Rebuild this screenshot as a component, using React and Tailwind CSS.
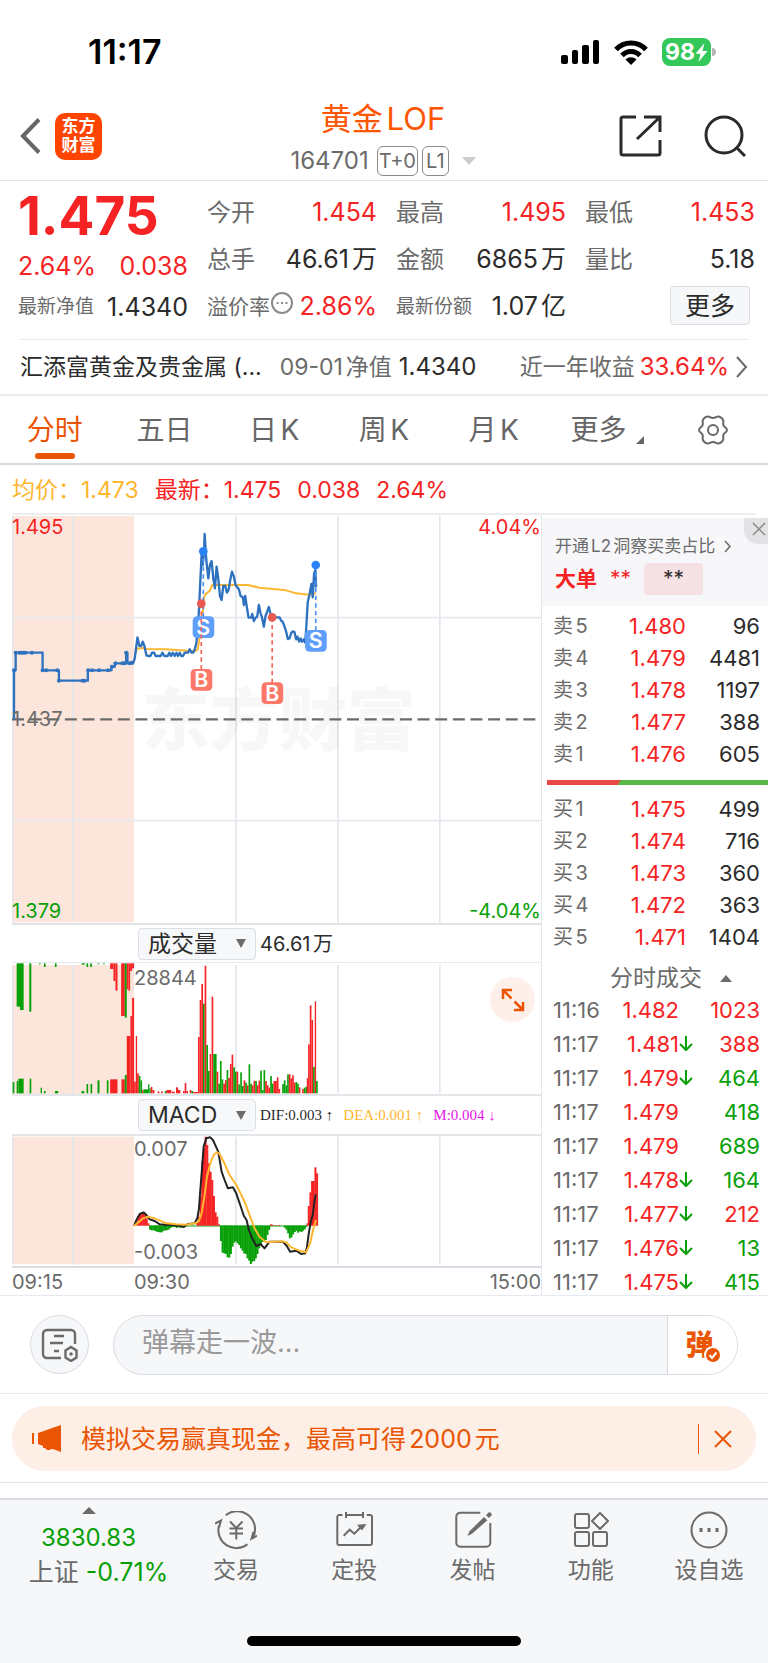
const quotes = [
  { label: '今开', value: '1.454', tone: 'text-[#f52323]' },
  { label: '最高', value: '1.495', tone: 'text-[#f52323]' },
  { label: '最低', value: '1.453', tone: 'text-[#f52323]' },
  { label: '总手', value: '46.61万', tone: 'text-[#2b2b2b]' },
  { label: '金额', value: '6865万', tone: 'text-[#2b2b2b]' },
  { label: '量比', value: '5.18', tone: 'text-[#2b2b2b]' },
];

const sells = [
  ['卖5', '1.480', '96'],
  ['卖4', '1.479', '4481'],
  ['卖3', '1.478', '1197'],
  ['卖2', '1.477', '388'],
  ['卖1', '1.476', '605'],
];

const buys = [
  ['买1', '1.475', '499'],
  ['买2', '1.474', '716'],
  ['买3', '1.473', '360'],
  ['买4', '1.472', '363'],
  ['买5', '1.471', '1404'],
];

const ticks = [
  { time: '11:16', price: '1.482', down: false, volume: '1023', buy: true },
  { time: '11:17', price: '1.481', down: true, volume: '388', buy: true },
  { time: '11:17', price: '1.479', down: true, volume: '464', buy: false },
  { time: '11:17', price: '1.479', down: false, volume: '418', buy: false },
  { time: '11:17', price: '1.479', down: false, volume: '689', buy: false },
  { time: '11:17', price: '1.478', down: true, volume: '164', buy: false },
  { time: '11:17', price: '1.477', down: true, volume: '212', buy: true },
  { time: '11:17', price: '1.476', down: true, volume: '13', buy: false },
  { time: '11:17', price: '1.475', down: true, volume: '415', buy: false },
];

const RED = '#f52323';
const GREEN = '#08a008';

const gridX = [219, 709, 1016, 1322];

const pricePoints =
  '42,628 42,481 47,481 47,428 128,428 128,481 177,481 177,512 264,512 264,481 335,481 335,470 345,470 345,460 379,460 379,428 383,428 383,460 400,460 405,445 413,382 419,408 424,408 429,395 434,408 440,436 445,438 452,438 457,428 463,428 468,438 483,438 488,428 494,438 504,438 509,428 514,438 519,428 525,438 530,428 535,438 540,428 545,438 550,438 555,428 565,428 570,418 576,428 581,428 586,415 590,400 594,360 598,300 602,215 606,130 609,165 613,130 615,72 620,150 626,205 631,165 636,153 641,205 646,235 651,170 656,205 661,258 666,270 671,228 677,228 682,248 687,240 692,210 697,185 703,200 708,225 713,232 718,238 723,258 730,262 733,285 737,258 742,292 747,323 755,323 758,312 763,333 768,323 773,320 778,285 783,310 787,320 793,350 798,318 803,305 808,291 813,312 818,322 840,322 845,332 850,336 855,350 860,365 865,387 870,385 875,370 880,364 885,366 890,388 894,380 899,395 903,385 908,395 913,388 917,398 920,360 925,275 930,255 936,222 940,262 944,190 948,180 950,232';

const avgPoints =
  '406,432 412,416 430,414 440,417 500,418 585,424 594,418 598,395 602,360 610,300 613,262 620,250 630,243 638,225 700,225 745,225 780,233 860,241 890,250 930,254 950,250';

const auctionDots = [
  [42, 481], [47, 428], [58, 428], [64, 428], [70, 428], [76, 428], [96, 428], [128, 481], [139, 481], [172, 481],
  [177, 512], [248, 512], [254, 512], [265, 481], [277, 481], [298, 481], [325, 481], [336, 470], [347, 460],
  [368, 460], [374, 460], [379, 428], [390, 460], [396, 458],
];

// [x, width, top, isUp]
const volumeBars = [
  [38, 5, 546, 0], [50, 5, 543, 0], [55, 16, 536, 0], [89, 5, 536, 0], [122, 4, 563, 0], [132, 5, 573, 0],
  [165, 10, 573, 0], [245, 8, 573, 0], [260, 5, 552, 0], [272, 5, 552, 0], [293, 6, 541, 0], [321, 5, 541, 0],
  [331, 22, 538, 1], [365, 10, 538, 1], [375, 6, 525, 0], [381, 11, 408, 1], [392, 5, 348, 1], [397, 6, 294, 1],
  [403, 5, 545, 1], [408, 4, 408, 1], [412, 5, 520, 1], [417, 5, 528, 0], [422, 5, 541, 0], [427, 4, 570, 1],
  [431, 14, 568, 0], [445, 4, 553, 0], [449, 4, 565, 0], [453, 5, 561, 1], [458, 6, 570, 1], [474, 5, 574, 1],
  [484, 5, 574, 1], [495, 5, 573, 0], [500, 15, 570, 1], [517, 8, 575, 1], [529, 6, 562, 1], [535, 7, 570, 1],
  [550, 5, 573, 1], [555, 5, 549, 1], [560, 5, 573, 1], [570, 5, 570, 1], [575, 5, 573, 0], [580, 15, 576, 1],
  [595, 5, 411, 1], [600, 5, 300, 1], [605, 5, 252, 1], [610, 5, 311, 0], [615, 5, 197, 1], [620, 5, 435, 0],
  [625, 5, 513, 0], [630, 5, 462, 1], [636, 5, 290, 1], [641, 10, 462, 0], [651, 5, 515, 1], [656, 5, 551, 0],
  [661, 5, 483, 0], [666, 5, 538, 0], [671, 5, 551, 1], [676, 5, 540, 1], [681, 5, 510, 0], [686, 5, 534, 1],
  [691, 5, 492, 1], [696, 5, 464, 1], [701, 5, 502, 0], [706, 5, 515, 0], [711, 5, 515, 1], [716, 5, 553, 0],
  [722, 5, 517, 0], [727, 5, 558, 0], [732, 5, 541, 1], [737, 5, 548, 0], [742, 5, 556, 1], [747, 5, 493, 0],
  [752, 5, 551, 0], [757, 5, 556, 1], [762, 5, 542, 1], [767, 5, 543, 0], [772, 5, 556, 1], [777, 5, 542, 1],
  [782, 5, 512, 0], [787, 5, 570, 0], [792, 5, 510, 0], [797, 5, 543, 1], [802, 5, 556, 1], [807, 5, 563, 1],
  [812, 5, 528, 0], [817, 5, 551, 0], [822, 10, 543, 1], [832, 5, 532, 1], [837, 5, 567, 1], [848, 5, 552, 0],
  [853, 5, 541, 0], [858, 5, 556, 0], [863, 5, 523, 0], [868, 5, 523, 1], [873, 5, 535, 1], [878, 5, 526, 1],
  [883, 5, 548, 1], [888, 5, 546, 0], [893, 5, 551, 0], [898, 5, 562, 1], [908, 5, 567, 1], [913, 5, 563, 0],
  [918, 5, 560, 0], [922, 4, 535, 1], [926, 5, 433, 1], [931, 5, 316, 1], [936, 5, 360, 1], [941, 5, 501, 0],
  [946, 4, 304, 1], [950, 5, 543, 0],
];

// unmatched auction orders, drawn from the top: [x, width, bottom, isUp]
const auctionBars = [
  [50, 10, 320, 0], [60, 11, 330, 0], [88, 6, 335, 0], [117, 5, 193, 0], [132, 5, 201, 0], [165, 5, 201, 0],
  [245, 10, 194, 0], [260, 5, 201, 0], [271, 5, 201, 0], [293, 5, 193, 0], [310, 5, 193, 0], [331, 10, 207, 1],
  [341, 6, 243, 1], [347, 6, 272, 1], [364, 11, 348, 1], [375, 6, 353, 0], [381, 5, 268, 1], [386, 5, 272, 1],
  [391, 6, 213, 1], [397, 6, 205, 1],
];

// [x, y] with the zero line at 977
const macdBars = [
  [408, 966], [413, 948], [418, 942], [423, 938], [428, 936], [433, 942], [438, 955], [443, 970], [448, 989],
  [453, 991], [458, 991], [463, 992], [468, 995], [473, 996], [478, 997], [483, 997], [488, 993], [493, 991],
  [498, 991], [503, 989], [508, 985], [513, 982], [518, 981], [523, 981], [528, 984], [533, 981], [538, 983],
  [543, 983], [548, 984], [553, 981], [590, 968], [595, 950], [600, 890], [605, 785], [610, 745], [615, 710],
  [620, 735], [625, 790], [630, 815], [635, 840], [640, 888], [645, 937], [650, 950], [655, 973], [661, 1023],
  [666, 1058], [671, 1060], [676, 1062], [681, 1072], [686, 1073], [691, 1062], [696, 1040], [701, 1028],
  [706, 1024], [711, 1030], [716, 1035], [721, 1045], [726, 1052], [731, 1060], [736, 1062], [741, 1075],
  [746, 1082], [751, 1092], [756, 1085], [761, 1083], [766, 1075], [771, 1062], [776, 1045], [781, 1035],
  [786, 1026], [791, 1022], [796, 1020], [801, 1005], [806, 990], [811, 973], [816, 974], [826, 975], [836, 975],
  [853, 983], [858, 989], [863, 1000], [868, 1015], [873, 1012], [878, 1003], [883, 996], [888, 992], [893, 998],
  [898, 994], [903, 996], [908, 992], [913, 988], [918, 981], [921, 970], [925, 918], [930, 877], [935, 843],
  [940, 843], [945, 802], [950, 820],
];

const difPoints =
  '403,977 410,960 420,942 432,937 440,945 450,958 465,963 480,973 500,975 520,975 553,980 565,972 585,970 593,955 598,925 602,870 606,820 612,740 620,715 632,712 640,720 650,742 656,755 666,815 675,840 685,865 700,862 710,880 722,915 733,948 741,960 748,990 758,1015 770,1038 783,1032 795,1045 810,1025 850,1025 862,1038 872,1055 890,1052 905,1062 917,1060 922,1045 928,1000 934,965 940,945 945,905 949,883';

const deaPoints =
  '403,977 415,968 430,955 445,950 465,955 500,970 530,973 560,974 585,970 597,965 606,940 615,885 622,830 632,790 642,765 652,757 660,762 672,785 690,825 712,858 735,905 750,945 765,985 780,1010 800,1027 850,1024 862,1028 875,1042 900,1052 920,1057 932,1030 942,985 950,960';

const StatusBar = () => (
  <div className="flex h-24 items-center justify-between pt-2 pl-[88px] pr-[52px] text-black">
    <span className="text-[34px] font-semibold leading-10">11:17</span>
    <div className="flex items-center gap-[14px]">
      <svg width="39" height="25" viewBox="0 0 39 25">
        <rect x="0" y="15" width="7" height="9" rx="2" />
        <rect x="11" y="10" width="6" height="14" rx="2" />
        <rect x="21" y="5" width="7" height="19" rx="2" />
        <rect x="32" y="0" width="6" height="24" rx="2" />
      </svg>
      <svg width="34" height="25" viewBox="0 0 34 25" fill="none" stroke="#000" strokeWidth="5">
        <path d="M2 9.5C10 .7 24 .7 32 9.5" />
        <path d="M8 15.5c5-5.400 13-5.400 18 0" />
        <path d="M17 25l-5.500-5.500c3-3 8-3 11 0z" fill="#000" stroke="none" />
      </svg>
      <div className="flex items-center gap-px">
        <div className="flex h-7 w-[49px] items-center justify-center rounded-lg bg-[#34c759] text-white">
          <span className="text-[23px] font-bold leading-7">98</span>
          <svg width="13" height="19" viewBox="0 0 13 19" fill="currentColor">
            <path d="M9.500 0L.5 10.800h5L3.500 19l9-11h-5z" />
          </svg>
        </div>
        <span className="h-2 w-1 rounded-r-full bg-[#b5b5b8]" />
      </div>
    </div>
  </div>
);

const Header = () => (
  <header className="grid h-[85px] grid-cols-[1fr_auto_1fr] items-center border-b border-[#e4e4e6] pl-[14px] pr-[22px]">
    <div className="flex items-center gap-2 pb-1">
      <button aria-label="返回" className="text-[#666]">
        <svg width="33" height="38" viewBox="0 0 33 38" fill="none" stroke="currentColor" strokeWidth="4">
          <path d="M25 2.500L9 19l16 16.500" />
        </svg>
      </button>
      <div className="flex h-[47px] w-[47px] flex-col items-center justify-center rounded-[10px] bg-[#ff4400] text-[17px] font-bold leading-[19px] text-white">
        <span>东方</span>
        <span>财富</span>
      </div>
    </div>
    <div className="flex flex-col items-center pl-[6px]">
      <h1 className="text-[31px] leading-10 text-[#ff5500]">黄金LOF</h1>
      <div className="mt-[6px] flex h-8 items-center gap-1 text-[#6b6b6b]">
        <span className="mr-1 text-[24px] leading-8">164701</span>
        <span className="flex h-[30px] items-center rounded-md border border-[#8a8a8a] px-px text-[20px] leading-7">T+0</span>
        <span className="flex h-[30px] items-center rounded-md border border-[#8a8a8a] px-[3px] text-[20px] leading-7">L1</span>
        <svg className="ml-[9px]" width="14" height="8" viewBox="0 0 14 8" fill="#ccc">
          <path d="M0 0h14L7 8z" />
        </svg>
      </div>
    </div>
    <div className="flex items-center justify-end gap-[42px] pb-1 text-[#2b2b2b]">
      <button aria-label="分享">
        <svg width="43" height="42" viewBox="0 0 43 42" fill="none" stroke="currentColor" strokeWidth="3">
          <path d="M17 2H4a2 2 0 00-2 2v34a2 2 0 002 2h35a2 2 0 002-2V25" />
          <path d="M25 2h16v15M41 2L18 24" />
        </svg>
      </button>
      <button aria-label="搜索">
        <svg width="42" height="42" viewBox="0 0 42 42" fill="none" stroke="currentColor" strokeWidth="3">
          <circle cx="20" cy="20" r="18" />
          <path d="M32 32l9 9" />
        </svg>
      </button>
    </div>
  </header>
);

const QuotePanel = () => (
  <section className="grid grid-cols-[170px_1fr] gap-x-[19px] pt-2 pb-[9px] pl-[18px] pr-[13px]">
    <div>
      <div className="text-[53px] font-bold leading-[54px] text-[#f52323]">1.475</div>
      <div className="flex justify-between text-[25px] leading-[46px] text-[#f52323]">
        <span>2.64%</span>
        <span>0.038</span>
      </div>
      <div className="flex items-center justify-between leading-[36px]">
        <span className="text-[19px] text-[#6b6b6b]">最新净值</span>
        <span className="text-[25px] text-[#2b2b2b]">1.4340</span>
      </div>
    </div>
    <div className="grid grid-cols-3 gap-x-[19px] text-[25px] leading-[47px]">
      {quotes.map((q) => (
        <div key={q.label} className="flex items-center justify-between">
          <span className="text-[24px] text-[#6b6b6b]">{q.label}</span>
          <span className={q.tone}>{q.value}</span>
        </div>
      ))}
      <div className="flex items-center justify-between">
        <span className="flex items-center text-[21px] text-[#6b6b6b]">
          溢价率
          <svg className="mb-2" width="24" height="24" viewBox="0 0 24 24" fill="none" stroke="#8a8a8a" strokeWidth="2">
            <circle cx="12" cy="12" r="10" />
            <path d="M6.500 12h2M11 12h2M15.500 12h2" />
          </svg>
        </span>
        <span className="text-[#f52323]">2.86%</span>
      </div>
      <div className="flex items-center justify-between">
        <span className="text-[19px] text-[#6b6b6b]">最新份额</span>
        <span className="text-[#2b2b2b]">1.07亿</span>
      </div>
      <div className="flex items-center justify-end pb-[2px] pr-[5px]">
        <button className="h-[39px] w-20 rounded border border-[#d9dce2] bg-[#f6f7f9] text-[25px] leading-9 text-[#2b2b2b]">更多</button>
      </div>
    </div>
  </section>
);

const FundRow = () => (
  <a href="#fund" className="flex h-[57px] items-center border-b-2 border-[#ededef] px-5">
    <div className="-mt-px flex h-full w-full items-center border-t border-[#e8e8ea] text-[23px] leading-8">
      <span className="text-[#2b2b2b]">汇添富黄金及贵金属 (...</span>
      <span className="ml-[18px] text-[#6b6b6b]">09-01净值</span>
      <span className="ml-[7px] text-[24px] text-[#2b2b2b]">1.4340</span>
      <span className="ml-auto text-[#6b6b6b]">近一年收益</span>
      <span className="ml-[5px] text-[24px] text-[#f52323]">33.64%</span>
      <svg className="ml-[6px]" width="13" height="22" viewBox="0 0 13 22" fill="none" stroke="#6b6b6b" strokeWidth="2">
        <path d="M2 1l9 10-9 10" />
      </svg>
    </div>
  </a>
);

const PeriodTabs = () => (
  <nav className="grid h-[69px] grid-cols-7 place-items-center border-b-2 border-[#d8dce2] text-[28px] leading-10 text-[#666]">
    <button className="relative text-[#ea5504]">
      分时
      <span className="absolute inset-x-2 -bottom-[9px] h-[6px] rounded-full bg-[#ea5504]" />
    </button>
    <button>五日</button>
    <button>日K</button>
    <button>周K</button>
    <button>月K</button>
    <button className="flex items-end gap-[10px] pl-2">
      更多
      <svg className="mb-[6px]" width="8" height="8" viewBox="0 0 8 8" fill="currentColor">
        <path d="M8 0v8H0z" />
      </svg>
    </button>
    <button aria-label="设置">
      <svg width="32" height="32" viewBox="0 0 32 32" fill="none" stroke="currentColor" strokeWidth="2">
        <path d="M11 2.500c1.500 0 2.500 1.500 5 1.500s3.500-1.500 5-1.500c2 0 4.600 1.800 5.200 3.800.5 1.700-.4 2.700.2 4.900.6 2.100 3.600 2.300 3.600 4.800s-3 2.700-3.600 4.800c-.6 2.200.3 3.200-.2 4.900-.6 2-3.200 3.800-5.200 3.800-1.500 0-2.500-1.500-5-1.500s-3.500 1.500-5 1.500c-2 0-4.600-1.800-5.200-3.800-.5-1.700.4-2.700-.2-4.900C5 18.700 2 18.500 2 16s3-2.700 3.600-4.800c.6-2.200-.3-3.200.2-4.900.6-2 3.200-3.800 5.200-3.800z" />
        <circle cx="16" cy="16" r="5" />
      </svg>
    </button>
  </nav>
);

const GridLines = ({ top, bottom }) => (
  <g stroke="#e3e6eb" strokeWidth="5">
    {gridX.map((x) => (
      <path key={x} d={`M${x} ${top}V${bottom}`} />
    ))}
    <path d={`M38 ${top}V${bottom}`} />
  </g>
);

const Marker = ({ x, dotY, boxY, type }) => {
  const sell = type === 'S';
  return (
    <g>
      <path d={`M${x} ${dotY}V${boxY}`} stroke={sell ? '#4a92f8' : '#fa6456'} strokeWidth="5" strokeDasharray="13 10" />
      <circle cx={x} cy={dotY} r="13" fill={sell ? '#2b82f6' : '#ea5a50'} />
      <rect x={x - 32} y={boxY - 32} width="65" height="65" rx="13" fill={sell ? '#5f9ffc' : '#fd7868'} />
      <text x={x} y={boxY + 23} textAnchor="middle" fontSize="64" fontWeight="600" fill="#fff">{type}</text>
    </g>
  );
};

const PriceChart = () => (
  <div className="relative text-[20px] leading-6">
    <svg className="block h-[410px] w-full" viewBox="36 15 1590 1230" preserveAspectRatio="none" fill="none">
      <rect x="36" y="18" width="367" height="1219" fill="#fce6db" />
      <GridLines top={18} bottom={1237} />
      <path d="M36 323H1626M36 932H1626" stroke="#e6e9ef" strokeWidth="5" />
      <path d="M36 1242H1626" stroke="#dfe2e7" strokeWidth="6" />
      <text x="425" y="706" fontSize="206" fontWeight="900" fill="#000" fillOpacity="0.03">东方财富</text>
      <path d="M36 628H1620" stroke="#6b6b6b" strokeWidth="7" strokeDasharray="36 17" />
      <polyline points={avgPoints} stroke="#fdb62f" strokeWidth="6" strokeLinejoin="round" />
      <polyline points={pricePoints} stroke="#2e72bf" strokeWidth="7" strokeLinejoin="round" />
      {auctionDots.map(([x, y]) => (
        <circle key={`${x}-${y}`} cx={x} cy={y} r="6" fill="#2e72bf" />
      ))}
      <Marker x={611} dotY={124} boxY={351} type="S" />
      <Marker x={605} dotY={281} boxY={509} type="B" />
      <Marker x={818} dotY={322} boxY={549} type="B" />
      <Marker x={949} dotY={165} boxY={392} type="S" />
    </svg>
    <span className="absolute left-0 top-0 text-[#f52323]">1.495</span>
    <span className="absolute right-0 top-0 text-[#f52323]">4.04%</span>
    <span className="absolute left-0 top-48 text-[#6b6b6b]">1.437</span>
    <span className="absolute bottom-[2px] left-0 text-[#08a008]">1.379</span>
    <span className="absolute bottom-[2px] right-0 text-[#08a008]">-4.04%</span>
  </div>
);

const IndicatorButton = ({ children }) => (
  <button className="flex h-8 w-[118px] items-center justify-between rounded border border-[#dcdfe5] bg-[#f7f8fa] px-[9px] text-[23px] leading-7 text-[#2b2b2b]">
    {children}
    <svg width="10" height="9" viewBox="0 0 10 9" fill="#6b6b6b">
      <path d="M0 0h10L5 9z" />
    </svg>
  </button>
);

const VolumeChart = () => (
  <div className="relative">
    <svg className="block h-[131px] w-full" viewBox="36 189 1590 393" preserveAspectRatio="none">
      <rect x="36" y="195" width="367" height="387" fill="#fce6db" />
      <GridLines top={195} bottom={580} />
      {auctionBars.map(([x, w, y, up]) => (
        <rect key={x} x={x} y="190" width={w} height={y - 190} fill={up ? RED : GREEN} />
      ))}
      {volumeBars.map(([x, w, y, up]) => (
        <rect key={x} x={x} y={y} width={w} height={580 - y} fill={up ? RED : GREEN} />
      ))}
    </svg>
    <span className="absolute left-[122px] top-[3px] text-[20px] leading-6 text-[#6b6b6b]">28844</span>
    <button aria-label="全屏" className="absolute right-[6px] top-[14px] flex h-[45px] w-[45px] items-center justify-center rounded-full bg-[#fef0e8]">
      <svg width="24" height="24" viewBox="0 0 24 24" fill="none" stroke="#ea5504" strokeWidth="2.500">
        <path d="M2 11V2h9M2 2l8.500 8.500M22 14v8h-9M22 22l-8.500-8.500" />
      </svg>
    </button>
  </div>
);

const MacdChart = () => (
  <div className="relative text-[20px] leading-6 text-[#6b6b6b]">
    <svg className="block h-[130px] w-full" viewBox="36 708 1590 390" preserveAspectRatio="none" fill="none">
      <rect x="36" y="710" width="367" height="383" fill="#fce6db" />
      <GridLines top={710} bottom={1093} />
      <path d="M448 978H922" stroke={GREEN} strokeWidth="3" />
      {macdBars.map(([x, y]) => (
        <rect key={x} x={x} y={Math.min(y, 977)} width="6" height={Math.abs(977 - y)} fill={y < 977 ? RED : GREEN} />
      ))}
      <polyline points={difPoints} stroke="#222" strokeWidth="6" strokeLinejoin="round" />
      <polyline points={deaPoints} stroke="#fdb62f" strokeWidth="6" strokeLinejoin="round" />
    </svg>
    <span className="absolute left-[122px] top-px">0.007</span>
    <span className="absolute bottom-[2px] left-[122px]">-0.003</span>
  </div>
);

const Charts = () => (
  <div className="min-w-0 flex-1">
    <PriceChart />
    <div className="flex h-[38px] items-center gap-1 border-b border-[#e6e9ef] pl-[126px]">
      <IndicatorButton>成交量</IndicatorButton>
      <span className="text-[20px] leading-6 text-[#2b2b2b]">46.61万</span>
    </div>
    <VolumeChart />
    <div className="flex h-[42px] items-center gap-1 border-y-2 border-[#e3e6eb] pl-[126px]">
      <IndicatorButton>MACD</IndicatorButton>
      <div className="flex gap-[10px] font-['Liberation_Serif','DejaVu_Sans',serif] text-[15px] leading-6">
        <span className="text-[#2b2b2b]">DIF:0.003 ↑</span>
        <span className="text-[#fdb62f]">DEA:0.001 ↑</span>
        <span className="text-[#e815e8]">M:0.004 ↓</span>
      </div>
    </div>
    <MacdChart />
    <div className="relative flex h-[29px] items-center justify-between border-t-2 border-[#d8dce2] pt-px text-[20px] leading-6 text-[#6b6b6b]">
      <span>09:15</span>
      <span className="absolute left-[122px]">09:30</span>
      <span>15:00</span>
    </div>
  </div>
);

const DepthTable = ({ rows }) => (
  <table className="w-full text-[22px] leading-8">
    <tbody>
      {rows.map(([label, price, volume]) => (
        <tr key={label} className="h-8">
          <td className="p-0 pl-[11px] text-[20px] text-[#6b6b6b]">{label}</td>
          <td className="w-20 p-0 text-right text-[#f52323]">{price}</td>
          <td className="w-[82px] p-0 pr-2 text-right text-[#2b2b2b]">{volume}</td>
        </tr>
      ))}
    </tbody>
  </table>
);

const OrderBook = () => (
  <aside className="w-[227px] shrink-0 border-l border-[#e3e6eb] pt-[3px]">
    <div className="relative h-[88px] bg-[#f7f7fa] pl-[13px] pt-4">
      <button aria-label="关闭" className="absolute right-0 top-0 flex h-[26px] w-6 items-center justify-end rounded-bl-[14px] bg-[#e3e3e6] pb-1 pr-[2px] text-[#8a8a8a]">
        <svg width="14" height="14" viewBox="0 0 14 14" fill="none" stroke="currentColor" strokeWidth="1.500">
          <path d="M1 1l12 12M13 1L1 13" />
        </svg>
      </button>
      <a href="#l2" className="flex items-center gap-[9px] text-[17px] leading-6 text-[#6b6b6b]">
        开通L2洞察买卖占比
        <svg width="8" height="13" viewBox="0 0 8 13" fill="none" stroke="currentColor" strokeWidth="1.500">
          <path d="M1 1l5 5.500L1 12" />
        </svg>
      </a>
      <div className="mt-[5px] flex h-8 items-center text-[21px] font-bold leading-8 text-[#f52323]">
        大单
        <span className="ml-[13px] font-normal">**</span>
        <span className="ml-[13px] w-[59px] rounded-sm bg-[#f6e1e4] text-center font-normal text-[#2b2b2b]">**</span>
      </div>
    </div>
    <div className="pt-1">
      <DepthTable rows={sells} />
    </div>
    <svg className="mb-2 mt-[10px] block h-[5px] w-full pl-[5px]" viewBox="0 0 220 5" preserveAspectRatio="none">
      <rect width="220" height="5" fill="#5ab946" />
      <path d="M0 0h74l-4 5H0z" fill="#ea4848" />
    </svg>
    <DepthTable rows={buys} />
    <button className="flex h-10 w-full items-center justify-center gap-[18px] pl-[42px] pr-[10px] pt-[10px] text-[23px] leading-[30px] text-[#6b6b6b]">
      分时成交
      <svg width="12" height="7" viewBox="0 0 12 7" fill="currentColor">
        <path d="M0 7h12L6 0z" />
      </svg>
    </button>
    <table className="-mb-1 w-full text-[22px] leading-[34px]">
      <tbody>
        {ticks.map((t, i) => (
          <tr key={i} className="h-[34px]">
            <td className="p-0 pl-[11px] text-[#6b6b6b]">{t.time}</td>
            <td className="w-[68px] p-0 text-right text-[#f52323]">{t.price}</td>
            <td className="w-[14px] p-0">
              {t.down && (
                <svg className="block" width="14" height="16" viewBox="0 0 14 16" fill="none" stroke={GREEN} strokeWidth="2">
                  <path d="M7 0v14M1 8l6 6 6-6" />
                </svg>
              )}
            </td>
            <td className={`w-[75px] p-0 pr-2 text-right ${t.buy ? 'text-[#f52323]' : 'text-[#08a008]'}`}>{t.volume}</td>
          </tr>
        ))}
      </tbody>
    </table>
  </aside>
);

const CommentBar = () => (
  <div className="flex h-[99px] items-center gap-6 border-y border-[#e6e9ef] px-[30px]">
    <button aria-label="弹幕设置" className="flex h-[59px] w-[59px] shrink-0 items-center justify-center rounded-full border border-[#d9dce2] bg-[#f6f7f9]">
      <svg width="37" height="34" viewBox="0 0 37 34" fill="none" stroke="#6b6b6b" strokeWidth="2.400">
        <path d="M34 16V6a4 4 0 00-4-4H6a4 4 0 00-4 4v20a4 4 0 004 4h14" />
        <path d="M13 8h10M9 15h13M13 23h5" />
        <path d="M30 19l5.500 3.500v7L30 33l-5.500-3.500v-7z" />
        <circle cx="30" cy="26" r="1.800" fill="#6b6b6b" stroke="none" />
      </svg>
    </button>
    <div className="flex h-[60px] flex-1 overflow-hidden rounded-full border border-[#d9dce2] bg-[#f6f7f9]">
      <input
        aria-label="弹幕"
        placeholder="弹幕走一波..."
        className="min-w-0 flex-1 bg-transparent pb-[2px] pl-7 text-[27px] text-[#2b2b2b] outline-none placeholder:text-[#999]"
      />
      <button className="relative w-[70px] border-l border-[#d9dce2] bg-white pr-[6px] text-[28px] font-black leading-[56px] text-[#ea5504]">
        弹
        <svg className="absolute bottom-[10px] right-[15px]" width="18" height="18" viewBox="0 0 18 18">
          <circle cx="9" cy="9" r="9" fill="#fff" />
          <circle cx="9" cy="9" r="7" fill="#ea5504" />
          <path d="M5.500 9l2.500 3 4.500-5.500" fill="none" stroke="#fff" strokeWidth="2" />
        </svg>
      </button>
    </div>
  </div>
);

const Banner = () => (
  <div className="border-b border-[#dfe2e7] px-3 pb-[11px] pt-3">
    <div className="flex h-[65px] items-center rounded-full bg-[#fdeee6] pl-5 pr-6 text-[#ea5504]">
      <svg width="30" height="27" viewBox="0 0 30 27" fill="currentColor">
        <path d="M0 8h2v11H0zM6 8L29 0v27l-8-3v0h-2l-1 1h-3l-2-2h-2v-2l-5-2z" />
      </svg>
      <a href="#promo" className="ml-[19px] text-[25px] leading-9">模拟交易赢真现金，最高可得2000元</a>
      <span className="ml-auto h-[30px] w-px bg-[#ea5504]" />
      <button aria-label="关闭" className="ml-[15px]">
        <svg width="18" height="18" viewBox="0 0 18 18" fill="none" stroke="currentColor" strokeWidth="2">
          <path d="M1 1l16 16M17 1L1 17" />
        </svg>
      </button>
    </div>
  </div>
);

const navItems = [
  {
    name: '交易',
    icon: (
      <>
        <path d="M10.700 4.200A18 18 0 0138 26.500M32.500 33.300A18 18 0 014 14.500" />
        <path d="M0 12.500l6-3-2 7M42 24.700l-5.500 3 2-7" />
        <path d="M15 10.500l6.300 6.500 6.200-6.500M14.500 17.500h13.500M14.500 22.500h13.500M21.300 17v11.500" />
      </>
    ),
  },
  {
    name: '定投',
    icon: (
      <>
        <path d="M9.500 4H6.300a2 2 0 00-2 2v26a2 2 0 002 2H37a2 2 0 002-2V6a2 2 0 00-2-2h-3.300M13 4h17M13 1v6M30 1v6" />
        <path d="M10.700 24.700l6-6 4.600 4 6.700-6.700" />
        <path d="M24 13.800l9.500-.8-4.500 6.500z" fill="currentColor" stroke="none" />
      </>
    ),
  },
  {
    name: '发帖',
    icon: (
      <>
        <path d="M28.300 1.700H8.300a4 4 0 00-4 4v26a4 4 0 004 4h26a4 4 0 004-4V12" />
        <path d="M32 6l3.300 3.300L20 22.700l-4.500 2.300 1.800-4.500zM34 4.200l2-2.200a1.800 1.800 0 013 3l-2 2z" fill="currentColor" stroke="none" />
      </>
    ),
  },
  {
    name: '功能',
    icon: (
      <>
        <rect x="5" y="3" width="14" height="14" rx="2" />
        <rect x="5" y="21" width="14" height="14" rx="2" />
        <rect x="23" y="21" width="14" height="14" rx="2" />
        <path d="M30 2l8 8-8 8-8-8z" strokeLinejoin="round" />
      </>
    ),
  },
  {
    name: '设自选',
    icon: (
      <>
        <circle cx="21" cy="19" r="17.500" />
        <path d="M11.500 19h3M19.500 19h3M27.500 19h3" strokeWidth="4" />
      </>
    ),
  },
];

const BottomNav = () => (
  <footer className="mt-[15px] border-t-2 border-[#d8dadd] bg-[#f6f7f9] pb-[17px]">
    <div className="flex h-[136px] pt-[7px]">
      <a href="#index" className="flex w-[177px] flex-col items-center text-[25px] leading-[35px] text-[#08a008]">
        <svg width="14" height="7" viewBox="0 0 14 7" fill="#6b6b6b">
          <path d="M0 7h14L7 0z" />
        </svg>
        <span className="mt-[6px] text-[24px]">3830.83</span>
        <span className="ml-5 whitespace-nowrap">
          <span className="text-[#6b6b6b]">上证</span> -0.71%
        </span>
      </a>
      {navItems.map((item) => (
        <a key={item.name} href="#nav" className="flex flex-1 flex-col items-center text-[23px] leading-8 text-[#6b6b6b]">
          <svg className="mt-1" width="42" height="40" viewBox="0 0 42 40" fill="none" stroke="currentColor" strokeWidth="2">
            {item.icon}
          </svg>
          <span className="mt-[3px]">{item.name}</span>
        </a>
      ))}
    </div>
    <div className="mx-auto h-[10px] w-[274px] rounded-full bg-black" />
  </footer>
);

const App = () => (
  <div className="bg-white font-['Inter','Noto_Sans_CJK_SC',sans-serif] [text-autospace:normal]">
    <StatusBar />
    <Header />
    <QuotePanel />
    <FundRow />
    <PeriodTabs />
    <div className="mx-3 flex h-[50px] items-center gap-4 border-b-2 border-[#ededef] pt-px text-[23px] leading-8 text-[#f52323]">
      <span className="text-[#fdb62f]">均价：1.473</span>
      <span>最新：1.475</span>
      <span>0.038</span>
      <span>2.64%</span>
    </div>
    <main className="flex pl-3">
      <Charts />
      <OrderBook />
    </main>
    <CommentBar />
    <Banner />
    <BottomNav />
  </div>
);

export default App;
